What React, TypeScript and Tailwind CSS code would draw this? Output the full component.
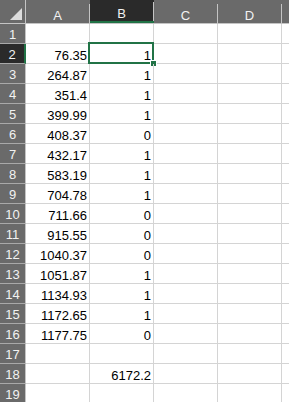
import React from 'react';

const rows: [string, string][] = [
  ['', ''],
  ['76.35', '1'],
  ['264.87', '1'],
  ['351.4', '1'],
  ['399.99', '1'],
  ['408.37', '0'],
  ['432.17', '1'],
  ['583.19', '1'],
  ['704.78', '1'],
  ['711.66', '0'],
  ['915.55', '0'],
  ['1040.37', '0'],
  ['1051.87', '1'],
  ['1134.93', '1'],
  ['1172.65', '1'],
  ['1177.75', '0'],
  ['', ''],
  ['', '6172.2'],
  ['', ''],
];

const cols = ['A', 'B', 'C', 'D'];

export default function App() {
  return (
    <div
      className="w-[289px] h-[402px] overflow-hidden bg-white text-[13px] text-black"
      style={{ fontFamily: '"Liberation Sans", Arial, sans-serif' }}
    >
      {/* Column headers */}
      <div className="flex h-[24px] bg-[#6a6a6a] border-b border-[#c4c4c4]">
        <div className="w-[26px] shrink-0 flex border-r border-[#c4c4c4]">
          <svg width="25" height="23" viewBox="0 0 25 23">
            <polygon points="22,8 22,20 10,20" fill="#dcdcdc" />
          </svg>
        </div>
        {cols.map((c) => {
          const sel = c === 'B';
          return (
            <div
              key={c}
              className={`w-[64px] shrink-0 flex ${sel ? 'bg-[#2a2a2a] border-b-2 border-[#217346]' : ''}`}
            >
              <div className="flex-1 flex items-end justify-center leading-[13px] pb-[1px] text-[#f2f2f2]">
                {c}
              </div>
              <div className="w-px h-[19px] self-end bg-[#c4c4c4]" />
            </div>
          );
        })}
        <div className="flex-1" />
      </div>

      {/* Rows */}
      {rows.map(([a, b], i) => {
        const n = i + 1;
        const sel = n === 2;
        return (
          <div key={n} className="flex h-[20px]">
            <div
              className={`w-[26px] shrink-0 flex items-end justify-center leading-[13px] pb-[2px] text-[#f2f2f2] border-b border-[#a9a9a9] ${
                sel ? 'bg-[#2a2a2a] border-r-2 border-r-[#217346]' : 'bg-[#6a6a6a] border-r border-r-[#c4c4c4]'
              }`}
            >
              {n}
            </div>
            <div className="w-[64px] shrink-0 flex items-end justify-end leading-[13px] pb-[1px] pr-[2px] border-r border-b border-[#d4d4d4]">
              {a}
            </div>
            <div className="relative w-[64px] shrink-0 flex items-end justify-end leading-[13px] pb-[1px] pr-[2px] border-r border-b border-[#d4d4d4]">
              {b}
              {sel && (
                <>
                  <div className="absolute left-[-2px] top-[-2px] w-[66px] h-[22px] border-2 border-[#217346]" />
                  <div className="absolute left-[60px] top-[16px] w-[7px] h-[7px] bg-[#217346] border border-white" />
                </>
              )}
            </div>
            <div className="w-[64px] shrink-0 border-r border-b border-[#d4d4d4]" />
            <div className="w-[64px] shrink-0 border-r border-b border-[#d4d4d4]" />
            <div className="flex-1 border-b border-[#d4d4d4]" />
          </div>
        );
      })}
    </div>
  );
}
